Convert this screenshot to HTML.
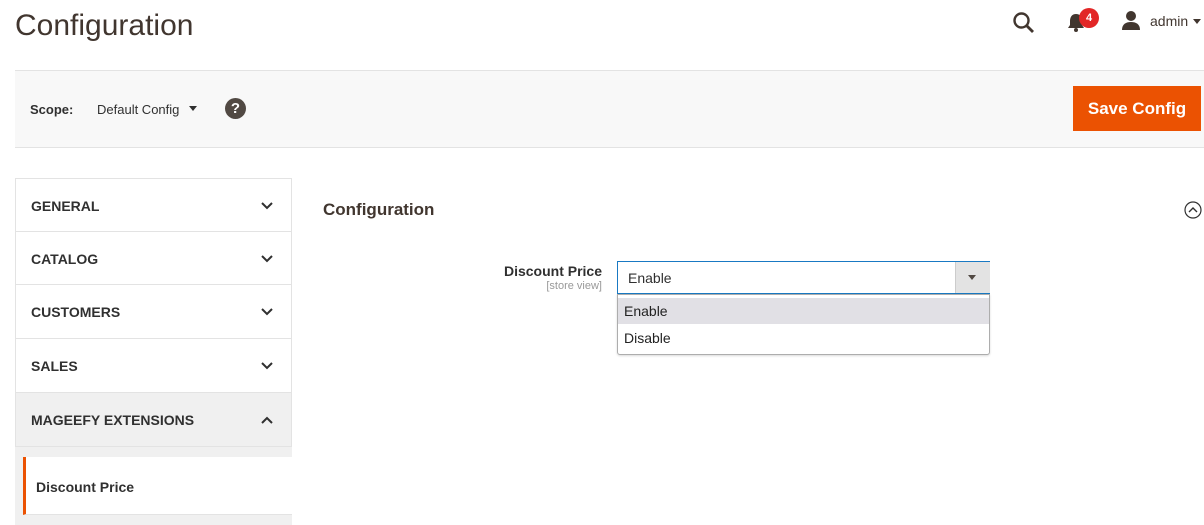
<!DOCTYPE html><html><head><style>
body{margin:0;width:1204px;height:525px;overflow:hidden;background:#fff;font-family:"Liberation Sans",sans-serif;color:#303030;position:relative}
.a{position:absolute}
.item{position:absolute;left:15px;width:277px;height:53px;border:1px solid #e3e3e3;border-top:none;font-weight:bold;font-size:14px;line-height:55px;box-sizing:border-box;padding-left:15px;color:#303030}
.item svg{position:absolute;right:18px;top:23px}
</style></head><body>
<div class="a" style="left:15px;top:9px;font-size:30px;color:#41362f">Configuration</div>
<svg class="a" style="left:1012px;top:11px" width="24" height="24" viewBox="0 0 24 24"><circle cx="9.5" cy="9.5" r="7" fill="none" stroke="#41362f" stroke-width="2.4"/><path d="M14.5 14.5l6.5 6.5" stroke="#41362f" stroke-width="2.8"/></svg>
<svg class="a" style="left:1067px;top:13px" width="18" height="20" viewBox="0 0 18 20"><path d="M9 1c-4 0-6 3-6 7v4l-2 3h16l-2-3V8c0-4-2-7-6-7z" fill="#41362f"/><circle cx="9" cy="17" r="2" fill="#41362f"/></svg>
<div class="a" style="left:1079px;top:8px;width:20px;height:20px;border-radius:50%;background:#e22626;color:#fff;font-size:11px;font-weight:bold;text-align:center;line-height:20px">4</div>
<svg class="a" style="left:1121px;top:10px" width="20" height="20" viewBox="0 0 20 20"><circle cx="10" cy="6" r="5" fill="#41362f"/><path d="M1 20c0-6 4-8 9-8s9 2 9 8z" fill="#41362f"/></svg>
<div class="a" style="left:1150px;top:13px;font-size:14px;color:#41362f">admin</div>
<div class="a" style="left:1193px;top:19px;border:4px solid transparent;border-top:5px solid #41362f"></div>
<div class="a" style="left:15px;top:70px;width:1189px;height:76px;background:#f8f8f8;border-top:1px solid #e3e3e3;border-bottom:1px solid #e3e3e3"></div>
<div class="a" style="left:30px;top:102px;font-size:13px;font-weight:bold">Scope:</div>
<div class="a" style="left:97px;top:102px;font-size:13px">Default Config</div>
<div class="a" style="left:189px;top:106px;border:4px solid transparent;border-top:5px solid #303030"></div>
<div class="a" style="left:225px;top:98px;width:21px;height:21px;border-radius:50%;background:#514943;color:#fff;font-weight:bold;font-size:15px;text-align:center;line-height:21px">?</div>
<div class="a" style="left:1073px;top:86px;width:128px;height:45px;background:#eb5202;color:#fff;font-size:17px;font-weight:bold;text-align:center;line-height:46px">Save Config</div>
<div class="item" style="top:178px;border-top:1px solid #e3e3e3;height:54px">GENERAL<svg width="12" height="8"><path d="M1 1l5 5 5-5" fill="none" stroke="#303030" stroke-width="2"/></svg></div>
<div class="item" style="top:232px">CATALOG<svg width="12" height="8"><path d="M1 1l5 5 5-5" fill="none" stroke="#303030" stroke-width="2"/></svg></div>
<div class="item" style="top:285px;height:54px">CUSTOMERS<svg width="12" height="8"><path d="M1 1l5 5 5-5" fill="none" stroke="#303030" stroke-width="2"/></svg></div>
<div class="item" style="top:339px;height:54px">SALES<svg width="12" height="8"><path d="M1 1l5 5 5-5" fill="none" stroke="#303030" stroke-width="2"/></svg></div>
<div class="item" style="top:393px;height:54px;background:#f0f0f0">MAGEEFY EXTENSIONS<svg width="12" height="8"><path d="M1 7l5-5 5 5" fill="none" stroke="#303030" stroke-width="2"/></svg></div>
<div class="a" style="left:15px;top:447px;width:277px;height:78px;background:#f0f0f0"></div>
<div class="a" style="left:23px;top:457px;width:269px;height:58px;background:#fff;border-left:3px solid #eb5202;border-bottom:1px solid #e3e3e3;box-sizing:border-box;font-size:14px;font-weight:bold;line-height:60px;padding-left:10px">Discount Price</div>
<div class="a" style="left:323px;top:200px;font-size:17px;font-weight:bold;color:#41362f">Configuration</div>
<svg class="a" style="left:1184px;top:201px" width="18" height="18"><circle cx="9" cy="9" r="8" fill="none" stroke="#303030" stroke-width="1.2"/><path d="M5 11l4-4 4 4" fill="none" stroke="#303030" stroke-width="1.4"/></svg>
<div class="a" style="left:480px;top:263px;width:122px;text-align:right;font-size:14px;font-weight:bold">Discount Price</div>
<div class="a" style="left:480px;top:280px;width:122px;text-align:right;font-size:11px;color:#999">[store view]</div>
<div class="a" style="left:617px;top:261px;width:373px;height:33px;border:1px solid #1979c3;box-sizing:border-box;background:#fff"></div>
<div class="a" style="left:628px;top:270px;font-size:14px">Enable</div>
<div class="a" style="left:955px;top:262px;width:34px;height:31px;background:#e3e3e3;border-left:1px solid #ccc"></div>
<div class="a" style="left:968px;top:275px;border:4px solid transparent;border-top:5px solid #514943"></div>
<div class="a" style="left:617px;top:294px;width:373px;height:61px;border:1px solid #adadad;border-radius:0 0 3px 3px;box-sizing:border-box;background:#fff;box-shadow:0 1px 2px rgba(0,0,0,.15)"></div>
<div class="a" style="left:618px;top:298px;width:371px;height:26px;background:#e1e0e5"></div>
<div class="a" style="left:624px;top:303px;font-size:14px;color:#222">Enable</div>
<div class="a" style="left:624px;top:330px;font-size:14px;color:#222">Disable</div>
</body></html>
